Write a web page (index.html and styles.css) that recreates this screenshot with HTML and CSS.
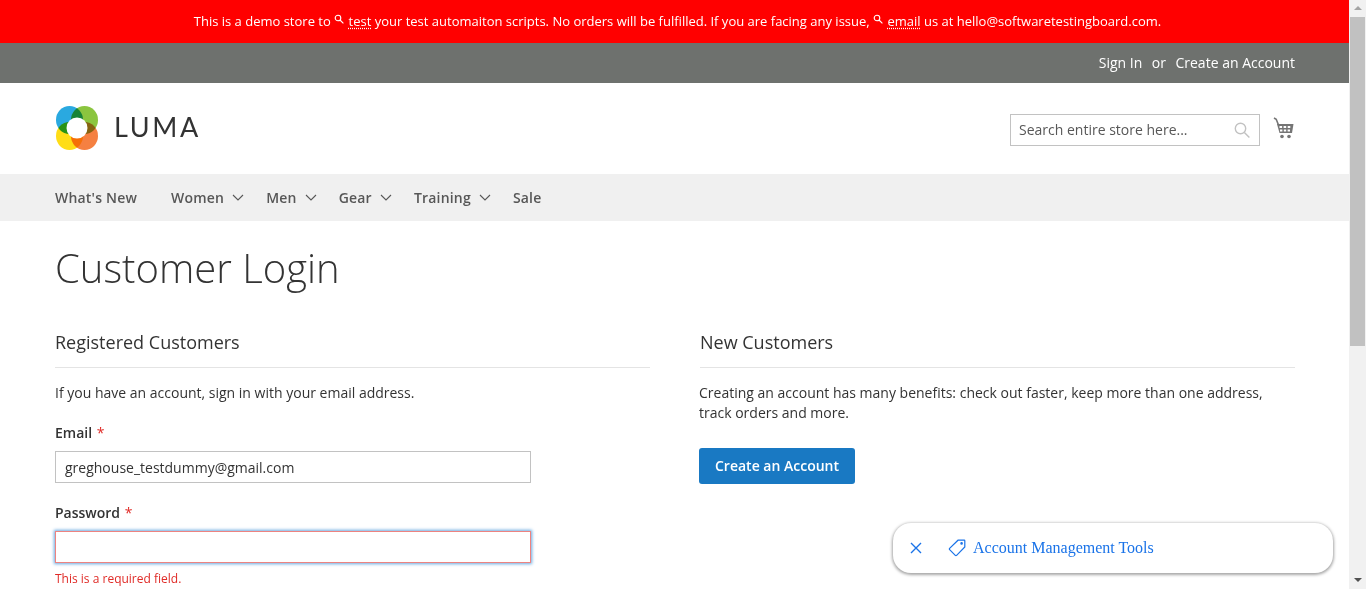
FILE: index.html
```html
<!DOCTYPE html>
<html lang="en">
<head>
  <meta charset="UTF-8" />
  <meta name="viewport" content="width=device-width, initial-scale=1" />
  <title>Customer Login</title>
  <link rel="stylesheet" href="styles.css">
</head>
<body>
  <div class="window">
    <div class="page">

      <div class="demo-notice">
        This is a demo store to
        <svg class="lens" viewBox="0 0 10 10"><circle cx="4" cy="4" r="2.8"/><path d="M6 6l3.4 3.4"/></svg>
        <span class="term">test</span> your test automaiton scripts. No orders will be fulfilled. If you are facing any issue,
        <svg class="lens" viewBox="0 0 10 10"><circle cx="4" cy="4" r="2.8"/><path d="M6 6l3.4 3.4"/></svg>
        <span class="term">email</span> us at hello@softwaretestingboard.com.
      </div>

      <div class="top-links">
        <a href="#">Sign In</a>
        <span>or</span>
        <a href="#">Create an Account</a>
      </div>

      <header class="site-header">
        <a class="logo" href="#">
          <svg class="logo-mark" viewBox="0 0 42 44">
            <g class="petals">
              <ellipse cx="13.5" cy="14" rx="13.5" ry="14" fill="#2aa9e0"/>
              <ellipse cx="28.5" cy="14" rx="13.5" ry="14" fill="#8bc53f"/>
              <ellipse cx="13.5" cy="30" rx="13.5" ry="14" fill="#ffdd17"/>
              <ellipse cx="28.5" cy="30" rx="13.5" ry="14" fill="#f58041"/>
            </g>
            <circle cx="21" cy="22" r="10.5" fill="#fff"/>
          </svg>
          <span class="logo-text">LUMA</span>
        </a>
        <div class="header-tools">
          <div class="search-box">
            <span class="search-placeholder">Search entire store here...</span>
            <svg class="search-icon" viewBox="0 0 16 16"><circle cx="6.5" cy="6.5" r="5.2"/><path d="M10.4 10.4l5 5"/></svg>
          </div>
          <svg class="cart" viewBox="0 0 22 22">
            <path class="cart-line" d="M1 1l2.2 1.2L5.5 8"/>
            <path d="M4 7h16.5l-1.5 9H6.5z"/>
            <g class="cart-windows">
              <rect x="6.5" y="9" width="2.6" height="2"/>
              <rect x="10.6" y="9" width="2.6" height="2"/>
              <rect x="14.7" y="9" width="2.6" height="2"/>
              <rect x="7" y="12.5" width="2.4" height="2"/>
              <rect x="10.8" y="12.5" width="2.4" height="2"/>
              <rect x="14.6" y="12.5" width="2.4" height="2"/>
            </g>
            <circle cx="9" cy="19.5" r="1.8"/>
            <circle cx="16" cy="19.5" r="1.8"/>
          </svg>
        </div>
      </header>

      <nav class="main-nav">
        <a class="nav-new" href="#">What's New</a>
        <a class="nav-item" href="#">Women <svg class="chev" viewBox="0 0 12 7"><path d="M1 1l5 5 5-5"/></svg></a>
        <a class="nav-item" href="#">Men <svg class="chev" viewBox="0 0 12 7"><path d="M1 1l5 5 5-5"/></svg></a>
        <a class="nav-item" href="#">Gear <svg class="chev" viewBox="0 0 12 7"><path d="M1 1l5 5 5-5"/></svg></a>
        <a class="nav-item" href="#">Training <svg class="chev" viewBox="0 0 12 7"><path d="M1 1l5 5 5-5"/></svg></a>
        <a href="#">Sale</a>
      </nav>

      <main class="content">
        <h1>Customer Login</h1>
        <div class="columns">
          <section class="col">
            <h2>Registered Customers</h2>
            <p>If you have an account, sign in with your email address.</p>
            <label class="field-label">Email <span class="req">*</span></label>
            <div class="input">greghouse_testdummy@gmail.com</div>
            <label class="field-label pass-label">Password <span class="req">*</span></label>
            <div class="input input-error"></div>
            <div class="error-text">This is a required field.</div>
          </section>
          <section class="col col-new">
            <h2>New Customers</h2>
            <p>Creating an account has many benefits: check out faster, keep more than one address, track orders and more.</p>
            <a class="btn" href="#">Create an Account</a>
          </section>
        </div>
      </main>

      <div class="tool-bubble">
        <svg class="bubble-x" viewBox="0 0 12 12"><path d="M1 1l10 10M11 1L1 11"/></svg>
        <svg class="bubble-tag" viewBox="0 0 18 18"><path d="M10 1.2h6.2a.6.6 0 0 1 .6.6V8L8.6 16.4a.9.9 0 0 1-1.3 0L1.6 10.7a.9.9 0 0 1 0-1.3z"/><circle cx="13.6" cy="4.4" r=".7"/></svg>
        <span>Account Management Tools</span>
      </div>
    </div>

    <div class="scrollbar">
      <div class="arrow-up"></div>
      <div class="thumb"></div>
      <div class="track"></div>
      <div class="arrow-down"></div>
    </div>
  </div>
</body>
</html>
```

FILE: styles.css
```css
* { box-sizing: border-box; }
html, body { margin: 0; height: 100%; overflow: hidden; }
body { font-family: "Open Sans", sans-serif; font-size: 14px; color: #333; background: #fff; }
a { color: inherit; text-decoration: none; }

.window { display: flex; height: 589px; }
.page { position: relative; flex: 1; min-width: 0; overflow: hidden; }

.demo-notice { height: 43px; padding-left: 6px; background: #f00; color: #fff; font-size: 13px; text-align: center; line-height: 43px; }
.lens { width: 10px; height: 10px; fill: none; stroke: #fff; stroke-width: 1.1; vertical-align: 2px; margin: 0 1px 0 0; }
.term { text-decoration: underline dotted #fff; text-underline-offset: 2px; }

.top-links {
  height: 40px; background: #6e716e; color: #fff; padding: 0 54px 2px 0;
  display: flex; align-items: center; justify-content: flex-end; gap: 9.5px;
}

.site-header {
  height: 91px; padding: 23px 54px 0 56px;
  display: flex; justify-content: space-between; align-items: flex-start;
}
.logo { display: flex; align-items: center; gap: 16px; }
.logo-mark { width: 42px; height: 44px; display: block; }
.petals ellipse { mix-blend-mode: multiply; }
.logo-text { font-family: "Lato", sans-serif; font-size: 27px; letter-spacing: 2.6px; color: #333; padding-bottom: 4px; }

.header-tools { display: flex; gap: 13px; padding-top: 8px; }
.search-box {
  width: 250px; height: 32px; border: 1px solid #c2c2c2; padding: 0 9px 2px 8px;
  display: flex; align-items: center; justify-content: space-between;
}
.search-placeholder { color: #575757; }
.search-icon { width: 16px; height: 16px; margin-top: 2px; fill: none; stroke: #c2c2c2; stroke-width: 1.4; }
.cart { width: 22px; height: 22px; margin-top: 3px; fill: #757575; }
.cart-line { fill: none; stroke: #757575; stroke-width: 1.6; }
.cart-windows { fill: #fff; }

.main-nav {
  height: 47px; background: #f0f0f0; padding-left: 55px; color: #575757;
  display: flex; align-items: center; font-weight: 600; letter-spacing: .2px;
}
.main-nav a { display: flex; align-items: center; }
.chev { width: 12px; height: 7px; margin-left: 8px; fill: none; stroke: #575757; stroke-width: 1.1; }
.nav-new { margin-right: 34px; }
.nav-item { margin-right: 22px; }

.content { padding: 0 54px 0 55px; }
h1 { margin: 0; padding-top: 19px; font-size: 40px; font-weight: 300; line-height: 56px; color: #333; }

.columns { display: flex; justify-content: space-between; padding-top: 34px; }
.col { width: 595px; }
h2 {
  margin: 0 0 15px; padding-bottom: 13px; border-bottom: 1px solid #e4e4e4;
  font-size: 18px; font-weight: 400; line-height: 24px;
}
p { margin: 0 0 20px; line-height: 20px; }
.col-new p { margin: 0 0 25px -1px; }

.field-label { display: block; font-weight: 600; line-height: 20px; margin-bottom: 8px; }
.pass-label { margin-top: 20px; }
.req { color: #e02b27; font-weight: 400; margin-left: 1px; }
.input {
  width: 476px; height: 32px; border: 1px solid #c2c2c2; padding: 0 9px;
  line-height: 31px;
}
.input-error { border-color: #ed8380; box-shadow: 0 0 3px 1px #68a8e0; }
.error-text { margin-top: 8px; font-size: 12px; line-height: 16px; color: #e02b27; }

.btn {
  display: inline-block; height: 36px; line-height: 36px; padding: 0 16px; margin-left: -1px;
  background: #1979c3; color: #fff; font-weight: 600; border-radius: 3px;
}

.tool-bubble {
  position: absolute; left: 893px; top: 523px; width: 440px; height: 50px;
  background: #fff; border-radius: 18px; box-shadow: 0 1px 3px 1px rgba(0,0,0,.35);
  display: flex; align-items: center; padding-left: 17px;
  font-family: "Liberation Serif", serif; font-size: 16px; color: #1a73e8;
}
.bubble-x { width: 12px; height: 12px; fill: none; stroke: #1a73e8; stroke-width: 1.4; }
.bubble-tag { width: 18px; height: 18px; margin: 0 7px 0 26px; fill: none; stroke: #1a73e8; stroke-width: 1.2; }

.scrollbar { width: 17px; background: #f1f1f1; display: flex; flex-direction: column; align-items: center; }
.thumb { width: 15px; height: 329px; background: #c1c1c1; }
.track { flex: 1; }
.arrow-up, .arrow-down { width: 17px; height: 17px; position: relative; flex-shrink: 0; }
.arrow-up::after, .arrow-down::after {
  content: ""; position: absolute; left: 5px; top: 6px;
  border-left: 4px solid transparent; border-right: 4px solid transparent;
}
.arrow-up::after { border-bottom: 4px solid #a3a3a3; }
.arrow-down::after { border-top: 4px solid #505050; }
```
